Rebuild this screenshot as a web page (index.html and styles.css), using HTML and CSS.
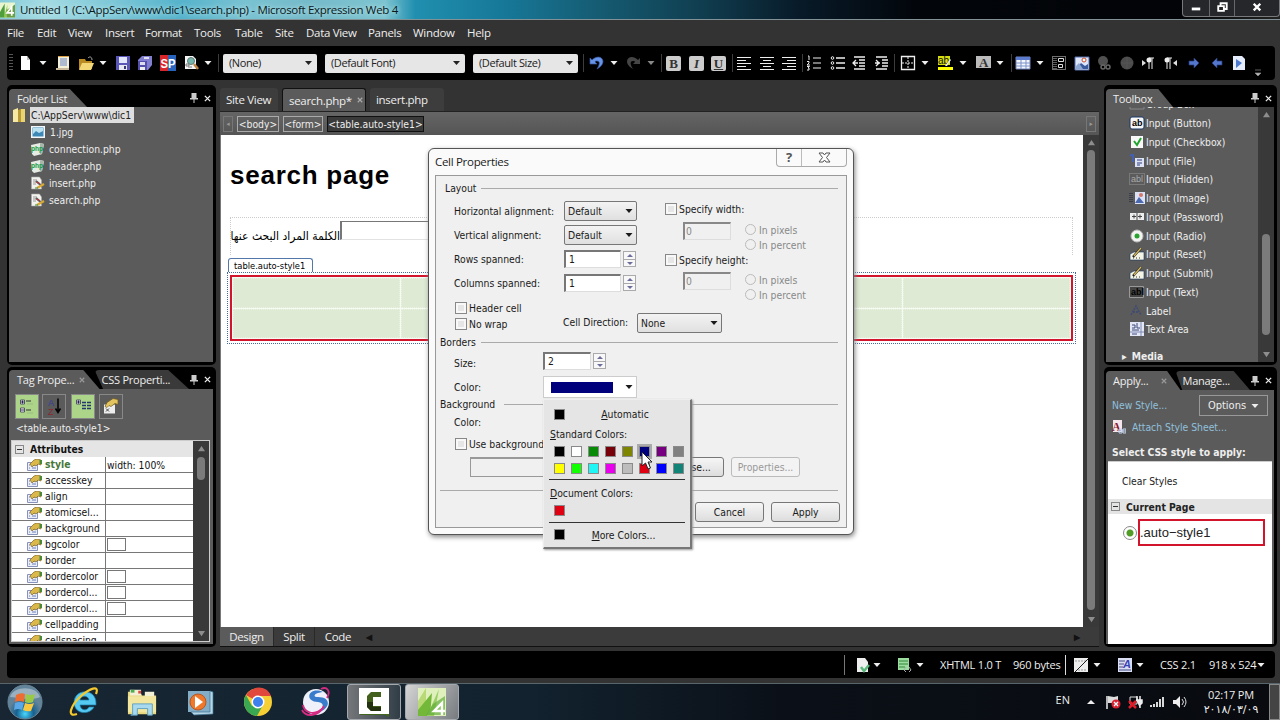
FILE: index.html
```html
<!DOCTYPE html>
<html lang="en">
<head>
    <meta charset="UTF-8">
    <meta name="viewport" content="width=device-width, initial-scale=1.0">
    <title>Untitled 1 - Microsoft Expression Web 4</title>
    <link rel="stylesheet" href="styles.css">
</head>
<body>
    <!-- shared icons -->
    <svg class="sprite" width="0" height="0">
        <symbol id="arrow" viewBox="0 0 8 16"><path d="M.5 6h7L4 10z" fill="currentColor"/></symbol>
        <symbol id="pin" viewBox="0 0 10 10"><path d="M2.500 0h5v5H9v1.500H1V5h1.500zM4.500 6.500h1V10h-1z" fill="#ccc"/></symbol>
        <symbol id="close" viewBox="0 0 8 8"><path d="M1 1l6 6M7 1L1 7" stroke="currentColor" stroke-width="1.500"/></symbol>
        <symbol id="up" viewBox="0 0 8 8"><path d="M4 1l4 6H0z" fill="#8d8d8d"/></symbol>
        <symbol id="down" viewBox="0 0 8 8"><path d="M4 7L0 1h8z" fill="#8d8d8d"/></symbol>
        <symbol id="prop" viewBox="0 0 15 12"><path d="M.5 3.500h10v8H.5z" fill="#e8edf8" stroke="#8893bd"/><path d="M2 6h1m1 0h5M2 9h1m2 0h4" stroke="#6e7fb8"/><path d="M3 5l4-4 3-1 4 1v5l-3-1-2 2-2-1-2 2z" fill="#dcb84a" stroke="#80651c" stroke-width=".7"/><path d="M12.500 1H15v4h-2.500z" fill="#478a3b"/></symbol>
        <symbol id="php" viewBox="0 0 14 14"><path d="M0 3l9-2 4 1-2 10-8 2-2-2z" fill="#e6ebe4"/><path d="M9 1l4 1-2 10-2 1z" fill="#a9b7ab"/><text x="0" y="8.500" font-size="8" textLength="12" lengthAdjust="spacingAndGlyphs" font-weight="bold" font-family="Liberation Sans" fill="#0d9c40">php</text></symbol>
        <symbol id="edit" viewBox="0 0 14 14"><path d="M.5 1h8l2 3v9H.500z" fill="#f2f2ee" stroke="#aaa" stroke-width=".6"/><path d="M2 4h4M2 6h5M2 8h3" stroke="#999"/><path d="M5 5l8 7" stroke="#5a5f68" stroke-width="2"/><path d="M6 12l7-4" stroke="#d9ab35" stroke-width="2.200"/><path d="M6 6l2 1.500" stroke="#c33" stroke-width="1.500"/><path d="M4 12h3" stroke="#3a8a3a"/></symbol>
        <symbol id="pen" viewBox="0 0 16 14"><path d="M1 7l4-2h10v8H1z" fill="#f3f4e5" stroke="#17385e" stroke-width=".6"/><path d="M4 10l8-9" stroke="#222" stroke-width="2.400"/><path d="M5 9l7-8" stroke="#d7bb5e" stroke-width="1.300"/><path d="M4 11h1m2 0h1m2 0h1" stroke="#333"/></symbol>
        <symbol id="pic" viewBox="0 0 16 16"><path d="M1 2h14v13H1z" fill="#dce5fa" stroke="#536dab"/><path d="M2 14l5-6 4 3 3-2v5z" fill="#385a9b"/><path d="M2 11l3-3 4 6H2z" fill="#8ca6d2"/><circle cx="10" cy="5" r="2" fill="#fff" stroke="#cc4b27"/></symbol>
        <symbol id="grid" viewBox="0 0 16 16"><path d="M1 2h14v12H1z" fill="#f4f7ff" stroke="#7183bb"/><path d="M1 2h14v3H1z" fill="#5c7bcc"/><path d="M1 8h14M1 11h14M6 5v9M11 5v9" stroke="#7d91c8"/></symbol>
    </svg>

    <header class="titlebar">
        <svg class="app-icon" viewBox="0 0 16 16"><path d="M0 0h16v16H0z" fill="#e9f5cf"/><path d="M0 10L5 1v15H0z" fill="#4e9e3e"/><path d="M4 16L8 2l-1 14z" fill="#8fc84b"/><path d="M7 16V8l9-6v14z" fill="#6c9f43"/><path d="M12.500 14V4.500L7.500 11H15" fill="none" stroke="#fff" stroke-width="1.800"/></svg>
        <span class="title">Untitled 1 (C:\AppServ\www\dic1\search.php) - Microsoft Expression Web 4</span>
        <div class="window-buttons">
            <svg viewBox="0 0 27 17"><path d="M9 8h9v3H9z" fill="#fff"/></svg>
            <svg viewBox="0 0 25 17"><path d="M8.500 6.500h6v5h-6zM11 6V3.500h6.500v6H15" fill="none" stroke="#fff" stroke-width="2"/></svg>
            <svg viewBox="0 0 43 17"><path d="M18 4l7 7m0-7l-7 7" stroke="#fff" stroke-width="2.500"/></svg>
        </div>
    </header>

    <nav class="menubar">
        <span>File</span><span>Edit</span><span>View</span><span>Insert</span><span>Format</span><span>Tools</span><span>Table</span><span>Site</span><span>Data View</span><span>Panels</span><span>Window</span><span>Help</span>
    </nav>

    <div class="toolbar">
        <i class="grip"></i>
        <svg class="ic" viewBox="0 0 16 16"><path d="M4 1h6l3 4v10H4z" fill="#fff"/><path d="M10 1v4h3" fill="#bbb"/></svg>
        <svg class="ar"><use href="#arrow"/></svg>
        <svg class="ic" viewBox="0 0 16 16"><path d="M3 1h11v12H3z" fill="#f3efd9"/><path d="M5 4h7M5 6h7M5 8h7M5 10h7" stroke="#6684c7"/><path d="M1 13h13v2H1z" fill="#c9b79a"/><path d="M3 1h11v1H3z" fill="#dca24a"/></svg>
        <svg class="ic" viewBox="0 0 16 16"><path d="M1 4h6l1 2h6v8H1z" fill="#b98b22"/><path d="M4 8h12l-3 7H1z" fill="#f3d776"/><path d="M10 3c2-2 4-1 4 2" fill="none" stroke="#aaa"/></svg>
        <svg class="ar"><use href="#arrow"/></svg>
        <svg class="ic" viewBox="0 0 16 16"><path d="M1 1h14v14H1z" fill="#5956b8"/><path d="M4 2h8v6H4z" fill="#e1e6fa"/><path d="M4 10h8v5H4z" fill="#e6e6f1"/><path d="M9 11h2v3H9z" fill="#333773"/></svg>
        <svg class="ic" viewBox="0 0 16 16"><path d="M5 1h10v9l-4 5H1V5z" fill="#827fd0"/><path d="M1 6h9v9H1z" fill="#534fab"/><path d="M3 7h5v3H3zM7 2h5v2H7z" fill="#dde"/><path d="M3 12h5v3H3z" fill="#eee"/></svg>
        <svg class="ic" viewBox="0 0 16 16"><path d="M0 0h8v16H0z" fill="#d8262b"/><path d="M8 0h8v16H8z" fill="#2763bb"/><text x="0.500" y="13" font-size="13" textLength="15" lengthAdjust="spacingAndGlyphs" font-family="Liberation Sans" font-weight="bold" fill="#fff">SP</text></svg>
        <svg class="ic" viewBox="0 0 16 16"><path d="M2 1h8l3 3v10H2z" fill="#f5f5f5"/><circle cx="8" cy="6" r="3.500" fill="#76b7ac" stroke="#627a77"/><path d="M11 9l4 5" stroke="#c18744" stroke-width="2.500"/><path d="M3 9h3v2H3zM5 12h4" stroke="#777" fill="none"/></svg>
        <svg class="ar"><use href="#arrow"/></svg>
        <i class="sep"></i>
        <div class="combo none"><span>(None)</span><svg><use href="#arrow"/></svg></div>
        <div class="combo font"><span>(Default Font)</span><svg><use href="#arrow"/></svg></div>
        <div class="combo size"><span>(Default Size)</span><svg><use href="#arrow"/></svg></div>
        <i class="sep"></i>
        <svg class="ic" viewBox="0 0 16 16"><path d="M1 3l2 2c4-4 10-4 11 1 0 4-3 6-6 8 2-3 4-8 0-8-1 0-2 0-2 1l2 2H1z" fill="#6794e6" stroke="#3757a8" stroke-width=".7"/></svg>
        <svg class="ar"><use href="#arrow"/></svg>
        <svg class="ic" viewBox="0 0 16 16"><path d="M15 3l-2 2c-4-4-10-4-11 1 0 4 3 6 6 8-2-3-4-8 0-8 1 0 2 0 2 1L8 9h7z" fill="#454545"/></svg>
        <svg class="ar dim"><use href="#arrow"/></svg>
        <i class="sep"></i>
        <b class="fmt">B</b>
        <i class="fmt">I</i>
        <u class="fmt">U</u>
        <i class="sep"></i>
        <svg class="ic" viewBox="0 0 16 16"><path d="M1 2.500h14M1 5.500h9M1 8.500h14M1 11.500h9M1 14.500h14" stroke="#eee"/></svg>
        <svg class="ic" viewBox="0 0 16 16"><path d="M1 2.500h14M4 5.500h8M1 8.500h14M4 11.500h8M1 14.500h14" stroke="#eee"/></svg>
        <svg class="ic" viewBox="0 0 16 16"><path d="M1 2.500h14M6 5.500h9M1 8.500h14M6 11.500h9M1 14.500h14" stroke="#eee"/></svg>
        <i class="sep"></i>
        <svg class="ic" viewBox="0 0 16 16"><path d="M7 3h8M7 8h8M7 13h8M2 1h1v4M1 6.500h2v1.500l-2 2h3M1 11.500h2.500L2 13h1v2H1" stroke="#eee" fill="none"/></svg>
        <svg class="ic" viewBox="0 0 16 16"><path d="M6 3h9M6 8h9M6 13h9" stroke="#eee" stroke-width="1.300"/><g fill="none" stroke="#eee"><circle cx="2.500" cy="3" r="1.300"/><circle cx="2.500" cy="8" r="1.300"/><circle cx="2.500" cy="13" r="1.300"/></g></svg>
        <svg class="ic" viewBox="0 0 16 16"><path d="M3 2h11M8 5h6M8 8h6M8 11h6M3 14h11M5 5L2 8l3 3M2 8h5" stroke="#eee" stroke-width="1.300" fill="none"/></svg>
        <svg class="ic" viewBox="0 0 16 16"><path d="M2 2h11M8 5h6M8 8h6M8 11h6M2 14h11M2 5l3 3-3 3M1 8h5" stroke="#eee" stroke-width="1.300" fill="none"/></svg>
        <i class="sep"></i>
        <svg class="ic" viewBox="0 0 16 16"><path d="M1.500 1.500h13v13h-13z" fill="none" stroke="#eee" stroke-width="1.300"/><path d="M8 2v12M2 8h12" stroke="#eee" stroke-dasharray="2 1"/></svg>
        <svg class="ar"><use href="#arrow"/></svg>
        <svg class="ic" viewBox="0 0 16 16"><path d="M1 1h12v9H1z" fill="#d5df10"/><text x="1" y="9" font-size="10" font-family="Liberation Sans" fill="#111">ab</text><path d="M14 5l-4 6H8l5-7z" fill="#e4e8ee"/><path d="M1 12h15v3H1z" fill="#ff0"/></svg>
        <svg class="ar"><use href="#arrow"/></svg>
        <svg class="ic" viewBox="0 0 16 16"><path d="M1 1h15v12H1z" fill="#bbb"/><text x="4" y="11.500" font-size="13" font-family="Liberation Serif" font-weight="bold" fill="#333">A</text></svg>
        <svg class="ar"><use href="#arrow"/></svg>
        <i class="sep"></i>
        <svg class="ic"><use href="#grid"/></svg>
        <svg class="ar"><use href="#arrow"/></svg>
        <svg class="ic" viewBox="0 0 16 16"><path d="M1.500 1.500h13v13h-13z" fill="none" stroke="#ddd" stroke-dasharray="1 1"/><path d="M3 3v11M5 3v11" stroke="#bbb" stroke-dasharray="1 1"/><path d="M7.500 3.500h5v3h-5zM7.500 9.500h4v3h-4z" fill="none" stroke="#ddd"/></svg>
        <svg class="ic"><use href="#pic"/></svg>
        <svg class="ic" viewBox="0 0 16 16"><circle cx="7" cy="6" r="5" fill="#505050"/><g fill="none" stroke="#666" stroke-width="1.500"><circle cx="7" cy="12" r="2"/><circle cx="12" cy="12" r="2"/></g></svg>
        <svg class="ic" viewBox="0 0 16 16"><circle cx="8" cy="8" r="6.500" fill="#4c4c4c"/><path d="M2 8h12M8 2v12" stroke="#555"/></svg>
        <svg class="ic" viewBox="0 0 16 16"><path d="M2 5l4 3-4 3z" fill="#ddd"/><path d="M9 14V3h5M12 3v11" stroke="#eee" fill="none"/><circle cx="9" cy="5" r="2.500" fill="#eee"/></svg>
        <svg class="ic" viewBox="0 0 16 16"><path d="M14 5l-4 3 4 3z" fill="#ddd"/><path d="M4 14V3h5M7 3v11" stroke="#eee" fill="none"/><circle cx="4" cy="5" r="2.500" fill="#eee"/></svg>
        <svg class="ic" viewBox="0 0 16 16"><path d="M3 6h5V3l5 5-5 5v-3H3z" fill="#5477cd" stroke="#263b79" stroke-width=".7"/></svg>
        <svg class="ic" viewBox="0 0 16 16"><path d="M13 6H8V3L3 8l5 5v-3h5z" fill="#5477cd" stroke="#263b79" stroke-width=".7"/></svg>
        <svg class="ic" viewBox="0 0 16 16"><path d="M2 1h9l3 3v11H2z" fill="#e5edfc"/><path d="M5 4l6 4-6 5z" fill="#4c78ce"/></svg>
        <svg class="overflow" viewBox="0 0 8 8"><path d="M1 1h6M1 4h6L4 7z" stroke="#888" fill="#bbb" stroke-width=".7"/></svg>
    </div>

    <main class="workspace">
        <aside class="side left">
            <section class="panel folder-panel">
                <div class="panel-head">
                    <span class="tab">Folder List</span>
                    <span class="head-tools"><svg><use href="#pin"/></svg><svg class="x"><use href="#close"/></svg></span>
                </div>
                <div class="panel-body folder-list">
                    <div class="root"><svg viewBox="0 0 12 14"><path d="M0 2l5-2v14H0z" fill="#f7e9a1"/><path d="M5 2l3-1v13H5z" fill="#b89b38"/><path d="M8 1h4v13H8z" fill="#e8d471"/></svg><span>C:\AppServ\www\dic1</span></div>
                    <div class="file jpg"><svg viewBox="0 0 14 14"><path d="M0 1h14v12H0z" fill="#f3f7fa"/><path d="M1.500 2.500h11v9h-11z" fill="#3d88b7"/><path d="M2 3h10v3L8 8 5 6 2 9z" fill="#bce2f2"/></svg><span>1.jpg</span></div>
                    <div class="file"><svg><use href="#php"/></svg><span>connection.php</span></div>
                    <div class="file"><svg><use href="#php"/></svg><span>header.php</span></div>
                    <div class="file"><svg><use href="#edit"/></svg><span>insert.php</span></div>
                    <div class="file"><svg><use href="#edit"/></svg><span>search.php</span></div>
                </div>
            </section>

            <section class="panel tag-panel">
                <div class="panel-head">
                    <span class="tab two">Tag Prope...<svg class="tx"><use href="#close"/></svg></span>
                    <span class="tab back">CSS Properti...</span>
                    <span class="head-tools"><svg><use href="#pin"/></svg><svg class="x"><use href="#close"/></svg></span>
                </div>
                <div class="panel-body tag-body">
                    <div class="tag-tools">
                        <svg class="on" viewBox="0 0 22 22"><path d="M4.500 4.500h4v4h-4zM4.500 12.500h4v4h-4z" fill="#fff" stroke="#556"/><path d="M6.500 5v3M5 6.500h3M5 14.500h3" stroke="#225"/><path d="M10 5.500h5M10 14.500h5" stroke="#333"/><path d="M11 8.500h6M11 17.500h6" stroke="#9aba80"/></svg>
                        <svg viewBox="0 0 22 22"><text x="5" y="10" font-size="9" font-family="Liberation Sans" fill="#343b9e">A</text><text x="5" y="19" font-size="9" font-family="Liberation Sans" fill="#8d2630">Z</text><path d="M15 3v13M12.500 13l2.500 4 2.500-4" stroke="#000" fill="none" stroke-width="1.500"/></svg>
                        <svg class="on second" viewBox="0 0 22 22"><path d="M4.500 4.500h4v4h-4z" fill="#fff" stroke="#556"/><path d="M6.500 5v3M5 6.500h3" stroke="#225"/><path d="M10 7h4M15 7h4M10 10h4M15 10h4M10 13h4M15 13h4" stroke="#26376b" stroke-width="1.400"/></svg>
                        <svg class="last" viewBox="0 0 22 22"><path d="M4 9h11v9H4z" fill="#eee"/><path d="M5 11l2-4 6-4 5 1v5l-3-1-4 3-2-1-2 2z" fill="#e3c45f" stroke="#6b571e" stroke-width=".7"/><path d="M6 13l3 3m-3 0l3-3" stroke="#444"/></svg>
                    </div>
                    <div class="tag-name">&lt;table.auto-style1&gt;</div>
                    <div class="prop-box">
                        <div class="prop-list">
                            <div class="group"><i class="minus"></i>Attributes</div>
                            <div class="prop set"><svg><use href="#prop"/></svg><span>style</span><em>width: 100%</em></div>
                            <div class="prop"><svg><use href="#prop"/></svg><span>accesskey</span><em></em></div>
                            <div class="prop"><svg><use href="#prop"/></svg><span>align</span><em></em></div>
                            <div class="prop"><svg><use href="#prop"/></svg><span>atomicsel...</span><em></em></div>
                            <div class="prop"><svg><use href="#prop"/></svg><span>background</span><em></em></div>
                            <div class="prop"><svg><use href="#prop"/></svg><span>bgcolor</span><em><i></i></em></div>
                            <div class="prop"><svg><use href="#prop"/></svg><span>border</span><em></em></div>
                            <div class="prop"><svg><use href="#prop"/></svg><span>bordercolor</span><em><i></i></em></div>
                            <div class="prop"><svg><use href="#prop"/></svg><span>bordercol...</span><em><i></i></em></div>
                            <div class="prop"><svg><use href="#prop"/></svg><span>bordercol...</span><em><i></i></em></div>
                            <div class="prop"><svg><use href="#prop"/></svg><span>cellpadding</span><em></em></div>
                            <div class="prop"><svg><use href="#prop"/></svg><span>cellspacing</span><em></em></div>
                        </div>
                        <div class="scroll prop-scroll"><svg><use href="#up"/></svg><i></i><svg class="end"><use href="#down"/></svg></div>
                    </div>
                </div>
            </section>
        </aside>

        <section class="editor">
            <div class="doc-tabs">
                <span class="doc-tab site">Site View</span>
                <span class="doc-tab active">search.php*<svg><use href="#close"/></svg></span>
                <span class="doc-tab insert">insert.php</span>
            </div>
            <div class="crumbs">
                <i class="nav">◂</i><span class="body">&lt;body&gt;</span><span class="form">&lt;form&gt;</span><span class="current">&lt;table.auto-style1&gt;</span><i class="nav next">▸</i>
            </div>
            <div class="design">
                <div class="canvas">
                    <h1>search page</h1>
                    <div class="form-box"><span dir="rtl" lang="ar">الكلمة المراد البحث عنها</span><i></i></div>
                    <div class="tag-label">table.auto-style1</div>
                    <div class="table-outline">
                        <div class="table">
                            <i></i><i></i><i></i><i></i><i></i>
                            <i></i><i></i><i></i><i></i><i></i>
                        </div>
                    </div>
                </div>
                <div class="scroll design-scroll"><svg><use href="#up"/></svg><i></i><svg class="end"><use href="#down"/></svg></div>
            </div>
            <div class="view-tabs"><span class="active">Design</span><span>Split</span><span>Code</span><b>◀</b><b class="tail">▶</b></div>
        </section>

        <aside class="side right">
            <section class="panel toolbox-panel">
                <div class="panel-head">
                    <span class="tab">Toolbox</span>
                    <span class="head-tools"><svg><use href="#pin"/></svg><svg class="x"><use href="#close"/></svg></span>
                </div>
                <div class="panel-body toolbox">
                    <div class="tool-list">
                        <div><svg viewBox="0 0 16 14"><path d="M1 2h14v10H1z" fill="none" stroke="#888"/></svg>Group Box</div>
                        <div><svg viewBox="0 0 16 14"><rect x="1" y="1" width="14" height="12" rx="2" fill="#f7f7f7" stroke="#1b3866"/><text x="3" y="10" font-size="9" font-weight="bold" font-family="Liberation Sans">ab</text></svg>Input (Button)</div>
                        <div><svg viewBox="0 0 16 14"><path d="M2 1h12v12H2z" fill="#f8f8f8"/><path d="M5 6l3 4 4-7" stroke="#22a52e" stroke-width="2" fill="none"/></svg>Input (Checkbox)</div>
                        <div><svg viewBox="0 0 16 14"><path d="M1 2l3-2v8" stroke="#4560b0" stroke-width="2" fill="none"/><path d="M6 4h9v9H6z" fill="#dde3f5"/><path d="M8 6h5M8 9h5M8 11h3" stroke="#2d3e7d"/></svg>Input (File)</div>
                        <div><svg viewBox="0 0 16 14"><path d="M.5 1.500h15v11H.5z" fill="none" stroke="#999" stroke-dasharray="1 1"/><text x="2" y="10" font-size="9" font-family="Liberation Sans" fill="#aaa">abl</text></svg>Input (Hidden)</div>
                        <div><svg viewBox="0 0 16 14"><path d="M1 2v10M3 2v10" stroke="#17203c" stroke-dasharray="1 1"/><path d="M6 1h10v12H6z" fill="#dbe2f7"/><path d="M6 12l4-6 5 6z" fill="#4b69ae"/><circle cx="12" cy="4" r="2" fill="#d47869"/></svg>Input (Image)</div>
                        <div><svg viewBox="0 0 16 14"><path d="M1 3h14v7H1z" fill="#eee"/><path d="M5 4.500v4M3 6.500h4M11 4.500v4M9 6.500h4M8 3v7" stroke="#444"/></svg>Input (Password)</div>
                        <div><svg viewBox="0 0 16 14"><circle cx="8" cy="7" r="6" fill="#f3f3f3" stroke="#bbb"/><circle cx="8" cy="7" r="2.500" fill="#29a32f"/></svg>Input (Radio)</div>
                        <div><svg><use href="#pen"/></svg>Input (Reset)</div>
                        <div><svg><use href="#pen"/></svg>Input (Submit)</div>
                        <div><svg viewBox="0 0 16 14"><path d="M.5 1.500h14v11H.5z" fill="#444" stroke="#999"/><text x="2" y="10" font-size="9" font-weight="bold" font-family="Liberation Sans">abl</text></svg>Input (Text)</div>
                        <div><svg viewBox="0 0 16 14"><path d="M2 11l5-9 5 9M4 8h6" fill="none" stroke="#3d4a76" stroke-width="1.500" stroke-dasharray="2 1"/></svg>Label</div>
                        <div><svg viewBox="0 0 16 14"><path d="M1 0h14v14H1z" fill="#e3e7f5"/><path d="M12 0v14M1 10h14" stroke="#7d88b3"/><path d="M3 3h3v3H3M8 1v5h3M3 8h7M3 12h5" stroke="#3d4879" fill="none"/></svg>Text Area</div>
                        <div class="media"><span>▸</span>Media</div>
                    </div>
                    <div class="scroll tool-scroll"><svg><use href="#up"/></svg><i></i><svg class="end"><use href="#down"/></svg></div>
                </div>
            </section>
            <section class="panel style-panel">
                <div class="panel-head">
                    <span class="tab two">Apply...<svg class="tx"><use href="#close"/></svg></span>
                    <span class="tab back">Manage...</span>
                    <span class="head-tools"><svg><use href="#pin"/></svg><svg class="x"><use href="#close"/></svg></span>
                </div>
                <div class="panel-body style-body">
                    <div class="style-top"><span class="link">New Style...</span><span class="options">Options<svg><use href="#arrow"/></svg></span></div>
                    <div class="attach"><svg viewBox="0 0 14 14"><path d="M1 0h9v12H1z" fill="#f5e7eb"/><text x="0" y="11" font-size="12" font-family="Liberation Serif" font-weight="bold" fill="#831b32">A</text><path d="M6 11h8M7 9h3v4H7zM11 9h3v4h-3z" fill="none" stroke="#c6d5ee"/></svg><span class="link">Attach Style Sheet...</span></div>
                    <div class="select-title">Select CSS style to apply:</div>
                    <div class="style-list">
                        <div class="clear">Clear Styles</div>
                        <div class="current-page"><i class="minus"></i>Current Page</div>
                        <div class="style-item"><i></i><span>.auto−style1</span></div>
                    </div>
                </div>
            </section>
        </aside>
    </main>

    <footer class="statusbar">
        <i class="sep"></i>
        <svg class="ic" viewBox="0 0 16 16"><path d="M2 1h8l3 4v10H2z" fill="#eee"/><path d="M6 10l3 4 5-6" fill="none" stroke="#58b87b" stroke-width="2.500"/></svg><svg class="ar"><use href="#arrow"/></svg>
        <svg class="ic" viewBox="0 0 16 16"><path d="M2 1h11v12H2z" fill="#9add9e"/><path d="M3 4h9M3 7h9M3 10h6" stroke="#37853c"/><path d="M10 10l-2 3 2 2m3-5l2 3-2 2" fill="none" stroke="#aaa"/></svg><svg class="ar"><use href="#arrow"/></svg>
        <span>XHTML 1.0 T</span><span>960 bytes</span>
        <i class="sep light"></i>
        <svg class="ic" viewBox="0 0 16 16"><path d="M1 1h14v14H1z" fill="#eee"/><path d="M2 4h12M5 13h9" stroke="#999" stroke-dasharray="2 1"/><path d="M2 15L15 2" stroke="#222"/></svg><svg class="ar"><use href="#arrow"/></svg>
        <svg class="ic" viewBox="0 0 16 16"><path d="M1 1h14v14H1z" fill="#d9def3"/><path d="M2 4h6M2 7h5M2 10h4M2 13h12" stroke="#444b82"/><text x="6" y="11" font-size="11" font-style="italic" font-weight="bold" font-family="Liberation Sans" fill="#3942b5">A</text></svg><svg class="ar"><use href="#arrow"/></svg>
        <span>CSS 2.1</span><span>918 x 524</span><svg class="ar"><use href="#arrow"/></svg>
    </footer>

    <div class="taskbar">
        <svg class="start" viewBox="0 0 36 36"><defs><radialGradient id="orb" cx=".5" cy=".85"><stop offset="0" stop-color="#48d7ff"/><stop offset=".5" stop-color="#17618f"/><stop offset="1" stop-color="#62849b"/></radialGradient></defs><circle cx="18" cy="18" r="17" fill="url(#orb)" stroke="#6b8798"/><path d="M3 13C6 2 29 1 33 13c-8 4-20 1-30 0" fill="#b5c7d2" opacity=".65"/><path d="M9 11q5-3 9-1l-1 8q-5-2-9 0z" fill="#ed6c32"/><path d="M19 10q4 2 9 0l-2 8q-4 2-8 0z" fill="#98ca47"/><path d="M8 19q5-2 9 0l-2 7q-4-2-8 0z" fill="#5ba8e9"/><path d="M18 19q5 2 9 0l-3 8q-4 1-8-1z" fill="#fac83e"/></svg>
        <svg viewBox="0 0 30 30"><path d="M25 20c-4 8-19 8-20-4C5 1 27 1 27 16v2H11c1 6 7 6 9 2zM11 13h9c-1-5-8-5-9 0z" fill="#55c9f2" stroke="#187eaf" stroke-width=".7"/><path d="M8 27C-3 31 2 18 12 9 20 2 31-3 27 7" fill="none" stroke="#f5c92e" stroke-width="2.200"/></svg>
        <svg viewBox="0 0 32 30"><path d="M1 4h13l2 4h15v20H1z" fill="#e9d77d"/><path d="M3 2h12v6H3zM19 4h10v5H19z" fill="#f4f0d6"/><path d="M4 2h4v3H4z" fill="#4caf50"/><path d="M12 3h3v3h-3z" fill="#d84b3e"/><path d="M1 9h30v17H1z" fill="#f3e7a0"/><path d="M6 28V17h21v12h-5v-7H11v7H4z" fill="#a9d9ee" stroke="#5c9fc2"/></svg>
        <svg viewBox="0 0 30 30"><path d="M3 4h22v21H3z" fill="#83adc6"/><path d="M25 4l3 1v22L9 28l-3-3h19z" fill="#b6d5e5" stroke="#3b7396" stroke-width=".7"/><circle cx="13" cy="15" r="8" fill="#ef782b" stroke="#b45827"/><path d="M10 9l8 6-8 6z" fill="#fff"/></svg>
        <svg viewBox="0 0 30 30"><circle cx="15" cy="15" r="14" fill="#f6cf35"/><path d="M15 15L3 8C9-2 24-2 28 9H16z" fill="#e0483e"/><path d="M3 8C-2 16 3 28 14 29l6-11-11 1z" fill="#39a852"/><circle cx="15" cy="15" r="6.500" fill="#fff"/><circle cx="15" cy="15" r="5" fill="#3e80ec"/></svg>
        <svg viewBox="0 0 30 30"><circle cx="15" cy="15" r="13" fill="#eef1fa"/><path d="M22 5C8-1 2 14 17 15c8 1 5 8-3 11 15-2 18-16 3-16-6 0-4-4 5-5" fill="#3a7ccc"/><path d="M20 2c6-3 10 2 6 9M1 23c4 8 17 6 22-4M2 18c1 7 11 12 20 3" fill="none" stroke="#d42b83" stroke-width="1.800"/></svg>
        <div class="task"><svg viewBox="0 0 30 30"><path d="M0 1h30v26H0z" fill="#fff"/><path d="M1 27h29v3l-4-2H1z" fill="#42661c"/><path d="M22 5H12L8 9v11l4 4h10v-5h-8v-9h8z" fill="#42601c"/><path d="M8 15h6v5h8v4H12l-4-4z" fill="#24310e"/></svg></div>
        <div class="task active"><svg viewBox="0 0 30 30"><path d="M1 1h28v28H1z" fill="#dff0bd"/><path d="M1 14L9 1v28H1z" fill="#b8d975"/><path d="M1 23L15 6l-2 23H1z" fill="#73b839"/><path d="M10 29L22 2l-5 27z" fill="#9bcf65"/><path d="M16 17l12-8v19H9z" fill="#5caa35" opacity=".65"/><path d="M25 28V16l-8 8h11" fill="none" stroke="#fff" stroke-width="2.400"/></svg></div>
        <div class="tray">
            <span class="lang">EN</span>
            <svg viewBox="0 0 16 16"><path d="M8 6l4 4H4z" fill="#eee"/></svg>
            <svg viewBox="0 0 16 16"><path d="M2 2v13" stroke="#eee" stroke-width="1.500"/><path d="M3 2l6 1 4-1v7H3z" fill="#ddd"/><circle cx="11" cy="10" r="4.500" fill="#d82131"/><path d="M9 8l4 4m0-4l-4 4" stroke="#fff" stroke-width="1.300"/></svg>
            <svg viewBox="0 0 16 16"><path d="M3 3h7v7H3z" fill="none" stroke="#ddd"/><path d="M10 2v4m3-4v4M9 6h6v3l-2 2v3" fill="#eee" stroke="#eee" stroke-width="1.500"/><path d="M2 7l7 7m0-7l-7 7" stroke="#dd1e29" stroke-width="2.500"/></svg>
            <svg viewBox="0 0 16 16"><path d="M2 13v-2M5 13v-3M8 13V8M11 13V5M14 13V3" stroke="#eee" stroke-width="1.800"/></svg>
            <svg viewBox="0 0 16 16"><path d="M2 6h3l4-4v12l-4-4H2z" fill="#eee"/><path d="M11 5q3 3 0 6M13 3q4 5 0 10" fill="none" stroke="#ddd"/></svg>
            <div class="clock"><span>02:17 PM</span><span lang="ar">٢٠١٨/٠٣/٠٩</span></div>
            <i class="show-desktop"></i>
        </div>
    </div>

    <div class="dialog">
        <div class="dialog-head"><span>Cell Properties</span><div class="dialog-buttons"><b>?</b><svg viewBox="0 0 44 17"><path d="M17 4h4l1.500 2L24 4h4l-3.500 4.500L28 13h-4l-1.500-2-1.500 2h-4l3.500-4.500z" fill="#fff" stroke="#555"/></svg></div></div>
        <div class="dialog-body">
            <div class="legend inset"><span>Layout</span></div>
            <div class="layout-area">
                <div class="fields">
                    <label>Horizontal alignment:</label><div class="select">Default<svg><use href="#arrow"/></svg></div>
                    <label>Vertical alignment:</label><div class="select">Default<svg><use href="#arrow"/></svg></div>
                    <label>Rows spanned:</label><div class="spin"><span>1</span><i class="steps"></i></div>
                    <label>Columns spanned:</label><div class="spin"><span>1</span><i class="steps"></i></div>
                </div>
                <div class="sizes">
                    <label class="check"><i></i>Specify width:</label>
                    <div class="measure"><span>0</span><div><label><i></i>In pixels</label><label><i></i>In percent</label></div></div>
                    <label class="check"><i></i>Specify height:</label>
                    <div class="measure last"><span>0</span><div><label><i></i>In pixels</label><label><i></i>In percent</label></div></div>
                </div>
            </div>
            <div class="cell-row">
                <div class="cell-checks"><label class="check"><i></i>Header cell</label><label class="check"><i></i>No wrap</label></div>
                <label class="direction">Cell Direction:</label>
                <div class="select wide">None<svg><use href="#arrow"/></svg></div>
            </div>
            <div class="legend"><span>Borders</span></div>
            <div class="border-row size-row"><label>Size:</label><div class="spin small"><span>2</span><i class="steps"></i></div></div>
            <div class="border-row color-row"><label>Color:</label><div class="color-field"><i></i><svg><use href="#arrow"/></svg></div></div>
            <div class="legend bg-legend"><span>Background</span></div>
            <div class="bg-color">Color:</div>
            <label class="check use-bg"><i></i>Use background picture</label>
            <div class="path-row"><i></i><span class="button browse">Browse...</span><span class="button disabled">Properties...</span></div>
            <div class="actions"><span class="button">Cancel</span><span class="button">Apply</span></div>
        </div>

        <div class="color-menu">
            <div class="menu-row auto"><i></i><span><u>A</u>utomatic</span></div>
            <div class="menu-title"><u>S</u>tandard Colors:</div>
            <div class="swatches">
                <i class="black"></i><i class="white"></i><i class="green"></i><i class="maroon"></i><i class="olive"></i><i class="navy"></i><i class="purple"></i><i class="gray"></i>
                <i class="yellow"></i><i class="lime"></i><i class="aqua"></i><i class="magenta"></i><i class="silver"></i><i class="red"></i><i class="blue"></i><i class="teal"></i>
            </div>
            <div class="menu-title doc"><u>D</u>ocument Colors:</div>
            <i class="doc-color red"></i>
            <div class="menu-row more"><i></i><span><u>M</u>ore Colors...</span></div>
        </div>
        <svg class="cursor" viewBox="0 0 12 19"><path d="M1 1v14l3.500-3 2.500 6 2.500-1-2.500-6h4z" fill="#fff" stroke="#222"/></svg>
    </div>
</body>
</html>
```

FILE: styles.css
```css
* {
    box-sizing: border-box;
}

body {
    margin: 0;
    width: 1280px;
    height: 720px;
    overflow: hidden;
    display: flex;
    flex-direction: column;
    position: relative;
    background: #333;
    color: #eee;
    font-family: "DejaVu Sans Condensed", "DejaVu Sans", sans-serif;
    font-size: 10.3px;
    line-height: 16px;
    white-space: nowrap;
}

i {
    font-style: normal;
}

svg {
    display: block;
    flex: none;
}

.sprite {
    position: absolute;
}

/* title and menu */
.titlebar {
    height: 20px;
    flex: none;
    display: flex;
    align-items: center;
    background: linear-gradient(90deg, #86cbd9 0, #a4dbe3 45px, #55b3cb 180px, #79c2d2 245px, #75bac9 310px, #7dc4d0 385px, #208faf 415px, #17799a 500px, #155b72 600px, #103e50 700px, #081a28 800px, #02050a 920px, #020407 1180px, #222 1280px);
    border-bottom: 1px solid #829196;
}

.app-icon {
    width: 15px;
    height: 16px;
}

.title {
    margin-left: 5px;
    color: #0a1820;
    font-family: "Open Sans", sans-serif;
    font-size: 11.5px;
    letter-spacing: -.32px;
    text-shadow: 0 0 5px #d6f4f5;
}

.window-buttons {
    display: flex;
    margin-left: auto;
    align-self: flex-start;
    width: 98px;
    height: 17px;
    border: 1px solid #77797b;
    border-top: 0;
    border-radius: 0 0 4px 4px;
    background: #25272a;
}

.window-buttons svg {
    height: 16px;
    border-right: 1px solid #66696b;
}

.window-buttons svg:nth-child(1) { width: 27px; }
.window-buttons svg:nth-child(2) { width: 25px; }
.window-buttons svg:nth-child(3) { width: 44px; border: 0; }

.menubar {
    height: 26px;
    flex: none;
    padding-left: 7px;
    display: grid;
    grid-template-columns: 30px 31px 37px 40px 49px 41px 40px 31px 62px 45px 54px 40px;
    align-items: center;
    font-family: "Open Sans", sans-serif;
    font-size: 11.5px;
    letter-spacing: -.3px;
}

.toolbar {
    height: 34px;
    flex: none;
    margin: 0 5px 0 7px;
    padding-left: 2px;
    background: #000;
    border-radius: 4px;
    display: grid;
    align-items: center;
    grid-template-columns: 8px 22px 16px 23px 21px 16px 22px 23px 23px 21px 14px 5px 102px 148px 110px 6px 21px 15px 22px 14px 5px 23px 22px 21px 4px 23px 22px 21px 4px 24px 21px 23px 20px 6px 21px 16px 22px 16px 21px 15px 4px 21px 15px 23px 22px 23px 21px 23px 23px 23px 22px 23px 20px;
}

.ic {
    width: 16px;
    height: 16px;
}

.ar {
    width: 8px;
    height: 16px;
}

.dim {
    color: #888;
}

.grip {
    width: 4px;
    height: 18px;
    background: repeating-linear-gradient(#555 0 1px, #000 1px 3px);
}

.sep {
    width: 1px;
    height: 18px;
    background: #3c3c3c;
}

.combo {
    height: 19px;
    display: flex;
    align-items: center;
    justify-content: space-between;
    padding: 0 4px 0 6px;
    border-radius: 2px;
    background: #e6e6e6;
    color: #222;
    font-family: "Open Sans", sans-serif;
    font-size: 11px;
    letter-spacing: -.4px;
}

.combo svg {
    width: 9px;
    height: 16px;
}

.none { width: 94px; }
.font { width: 140px; }
.size { width: 105px; }

.fmt {
    width: 15px;
    height: 15px;
    border-radius: 2px;
    background: #ccc;
    color: #333;
    font: bold 13px/15px "Liberation Serif", serif;
    text-align: center;
}

i.fmt {
    font-style: italic;
}

.overflow {
    width: 8px;
    height: 8px;
    margin-top: 20px;
}

/* docked panels */
.workspace {
    height: 571px;
    flex: none;
    display: flex;
    padding: 5px 4px 4px 7px;
}

.side {
    display: flex;
    flex-direction: column;
    gap: 2px;
}

.left { width: 209px; }
.right { width: 173px; margin-left: 5px; }

.panel {
    background: #000;
    border-radius: 5px;
    padding: 4px 3px 3px 2px;
    display: flex;
    flex-direction: column;
}

.folder-panel, .toolbox-panel { height: 280px; }
.tag-panel, .style-panel { height: 280px; }

.panel-head {
    height: 18px;
    flex: none;
    display: flex;
    font-family: "Open Sans", sans-serif;
    font-size: 11px;
    letter-spacing: -.25px;
    line-height: 19px;
}

.tab {
    width: 78px;
    padding-left: 8px;
    border-radius: 4px 0 0 0;
    background: #5b5b5b;
    clip-path: polygon(0 0, 78% 0, 100% 100%, 0 100%);
}

.tab.two {
    width: 93px;
    display: flex;
    align-items: center;
    clip-path: polygon(0 0, 82% 0, 100% 100%, 0 100%);
}

.tab .tx {
    width: 6px;
    height: 6px;
    margin-left: auto;
    margin-right: 15px;
    color: #999;
}

.tab.back {
    width: 97px;
    margin-left: -5px;
    padding-left: 7px;
    background: #3a3a3a;
    clip-path: polygon(0 0, 78% 0, 100% 100%, 9% 100%);
}

.head-tools {
    display: flex;
    gap: 5px;
    align-items: center;
    margin-left: auto;
    padding-right: 1px;
}

.head-tools svg {
    width: 10px;
    height: 10px;
}

.head-tools .x {
    width: 7px;
    height: 7px;
    margin-right: 1px;
}

.panel-body {
    flex: 1;
    min-height: 0;
    background: #5b5b5b;
}

.root, .file {
    height: 17px;
    display: flex;
    align-items: center;
}

.root {
    height: 16.5px;
    padding-left: 4px;
    gap: 5px;
}

.root svg {
    width: 12px;
    height: 14px;
}

.root span {
    height: 16px;
    width: 104px;
    line-height: 16px;
    padding-left: 1px;
    background: #dedede;
    color: #222;
}

.file {
    padding-left: 22px;
    gap: 4px;
}

.jpg {
    gap: 5px;
}

.file svg {
    width: 14px;
    height: 14px;
}

.tag-panel {
    padding-top: 3px;
}

.tag-panel .panel-head, .style-panel .panel-head {
    height: 19px;
    line-height: 20px;
}

.tag-body {
    padding: 5px 3px 1px 2px;
}

.tag-tools {
    height: 26px;
    display: flex;
    padding-left: 4px;
    gap: 3px;
}

.tag-tools svg {
    width: 24px;
    height: 25px;
    border: 1px solid #888;
}

.tag-tools .on { background: #acd58a; }
.tag-tools .second { margin-left: 2px; }
.tag-tools .last { margin-left: 1px; }

.tag-name {
    height: 20px;
    padding-left: 5px;
    line-height: 17px;
}

.prop-box {
    height: 202px;
    display: flex;
    border: 1px solid #ccc;
    overflow: hidden;
    color: #111;
    background: #fff;
}

.prop-list {
    flex: 1;
    overflow: hidden;
}

.group {
    height: 16px;
    display: flex;
    align-items: center;
    padding-left: 3px;
    background: #e5e5e5;
    font-weight: bold;
}

.minus {
    width: 9px;
    height: 9px;
    margin-right: 6px;
    border: 1px solid #888;
    background: linear-gradient(#333, #333) center / 5px 1px no-repeat;
}

.prop {
    height: 16px;
    display: flex;
    align-items: center;
    padding-left: 15px;
    border-bottom: 1px solid #777;
}

.prop svg {
    width: 15px;
    height: 12px;
}

.prop span {
    width: 63px;
    padding-left: 3px;
    line-height: 15px;
}

.prop em {
    flex: 1;
    height: 16px;
    padding: 1px;
    border-left: 1px solid #777;
    font-style: normal;
    line-height: 14px;
}

.prop em i {
    display: block;
    width: 19px;
    height: 13px;
    border: 1px solid #777;
}

.set span {
    color: #477739;
    font-weight: bold;
}

.scroll {
    width: 16px;
    flex: none;
    display: flex;
    flex-direction: column;
    align-items: center;
    background: #393939;
    padding: 4px 0;
}

.scroll svg {
    width: 7px;
    height: 7px;
}

.scroll i {
    width: 8px;
    border-radius: 4px;
    background: #7b7b7b;
    margin-top: 5px;
}

.scroll .end { margin-top: auto; }
.prop-scroll i { height: 23px; }
.design-scroll i { height: 460px; margin-top: 4px; }
.tool-scroll i { height: 101px; margin-top: 116px; }

/* editor */
.editor {
    width: 879px;
    margin-left: 4px;
    display: flex;
    flex-direction: column;
}

.doc-tabs {
    height: 26px;
    display: flex;
    align-items: flex-end;
    gap: 4px;
    padding-top: 3px;
}

.doc-tab {
    height: 23px;
    padding-left: 6px;
    background: #3d3d3d;
    line-height: 23px;
    border-radius: 3px 3px 0 0;
    font-family: "Open Sans", sans-serif;
    font-size: 11.5px;
    letter-spacing: -.3px;
}

.site { width: 58px; }
.doc-tab.active { width: 84px; display: flex; align-items: center; background: #5b5b5b; border: 1px solid #111; border-bottom: 0; }
.doc-tab.insert { width: 74px; }

.doc-tab svg {
    width: 6px;
    height: 6px;
    margin-left: 5px;
    color: #aaa;
}

.crumbs {
    height: 24px;
    display: flex;
    align-items: center;
    gap: 4px;
    padding: 0 3px;
    background: linear-gradient(#656565, #555);
    border-top: 1px solid #222;
}

.crumbs span, .nav {
    height: 16px;
    border: 1px solid #aaa;
    line-height: 14px;
    text-align: center;
}

.crumbs .body { width: 42px; }
.crumbs .form { width: 40px; }

.crumbs .current {
    width: 97px;
    background: #3a3a3a;
    border-color: #111;
}

.crumbs .nav {
    width: 10px;
    border-color: #777;
    color: #999;
    font-size: 7px;
}

.crumbs .next {
    margin-left: auto;
}

.design {
    height: 492px;
    display: flex;
    background: #fff;
}

.canvas {
    flex: 1;
    padding: 24px 7px 0 7px;
    color: #000;
    border-left: 1px solid #777;
}

h1 {
    margin: 0 0 25px 2px;
    font: bold 26px/33px "Liberation Sans", sans-serif;
    letter-spacing: .75px;
}

.form-box {
    height: 38px;
    width: 843px;
    margin-left: 2px;
    display: flex;
    border: 1px dotted #ccc;
    border-bottom: 0;
}

.form-box span {
    width: 109px;
    font: 12px/37px "DejaVu Sans Condensed", "DejaVu Sans", sans-serif;
}

.form-box i {
    width: 160px;
    height: 19px;
    margin-top: 3px;
    border: 1px solid #e2e2e2;
    border-top: 1px solid #777;
    border-left: 2px solid #777;
}

.tag-label {
    width: 85px;
    height: 14px;
    margin-top: 3px;
    padding-left: 5px;
    border: 1px solid #5377a9;
    border-bottom: 0;
    border-radius: 3px 3px 0 0;
    line-height: 13px;
    font-size: 9.3px;
}

.table-outline {
    width: 849px;
    height: 72px;
    margin-left: -1px;
    padding: 2px;
    border: 1px dotted #4668a0;
}

.table {
    height: 66px;
    border: 2px solid #d2142d;
    display: grid;
    grid-template-columns: repeat(5, 1fr);
    gap: 1px;
    background: #f5fbf0;
    padding: 1px;
}

.table i {
    background: #deead3;
    border: 1px dotted #e9f1e2;
}

.view-tabs {
    height: 20px;
    display: flex;
    background: #3b3b3b;
    border-bottom: 1px solid #111;
    font-family: "Open Sans", sans-serif;
    font-size: 11.5px;
    letter-spacing: -.3px;
    line-height: 19px;
}

.view-tabs span {
    width: 41px;
    text-align: center;
    border-right: 1px solid #292929;
}

.view-tabs .active {
    width: 54px;
    background: #5b5b5b;
}

.view-tabs span:nth-child(3) { width: 46px; border: 0; }
.view-tabs b { color: #111; font-size: 8px; margin-left: 5px; }
.view-tabs .tail { margin-left: auto; margin-right: 19px; }

/* right panels */
.toolbox {
    display: flex;
    overflow: hidden;
}

.toolbox .tool-list {
    flex: 1;
    margin-top: -12px;
}

.tool-list div {
    height: 18.75px;
    display: flex;
    align-items: center;
    padding-left: 23px;
    gap: 1px;
}

.tool-list svg {
    width: 16px;
    height: 14px;
}

.tool-list .media {
    margin-top: 8px;
    padding-left: 16px;
    font-weight: bold;
    gap: 5px;
}

.right .tab { width: 67px; padding-left: 7px; }
.right .tab.two { width: 76px; padding-left: 7px; }
.right .tab.two .tx { margin-right: 14px; }
.right .tab.back { width: 76px; }
.right .head-tools { margin-left: auto; }

.style-body {
    padding: 5px 2px 0 2px;
    display: flex;
    flex-direction: column;
}

.link {
    color: #91c0dd;
}

.style-top {
    height: 25px;
    display: flex;
    justify-content: space-between;
    padding: 0 4px 0 4px;
    line-height: 20px;
}

.options {
    width: 69px;
    height: 21px;
    display: flex;
    align-items: center;
    justify-content: center;
    gap: 5px;
    border: 1px solid #999;
    font-size: 11px;
}

.options svg {
    width: 8px;
    height: 16px;
}

.attach {
    height: 20px;
    display: flex;
    gap: 6px;
    padding-left: 4px;
    line-height: 15px;
}

.attach svg {
    width: 14px;
    height: 14px;
}

.select-title {
    height: 21px;
    padding: 4px 0 0 4px;
    font-weight: bold;
}

.style-list {
    flex: 1;
    background: #fff;
    color: #222;
    border-top: 1px solid #ccc;
}

.clear {
    height: 37px;
    padding: 11px 0 0 14px;
}

.current-page {
    height: 15px;
    display: flex;
    align-items: center;
    padding-left: 3px;
    background: #e4e4e4;
    font-weight: bold;
}

.style-item {
    display: flex;
    align-items: center;
    padding: 5px 5px 0 15px;
}

.style-item i {
    width: 14px;
    height: 14px;
    border-radius: 7px;
    border: 1px solid #888;
    background: radial-gradient(circle, #519b27 0 3px, #fff 4px);
}

.style-item span {
    width: 127px;
    height: 27px;
    margin-left: 1px;
    border: 2px solid #d2142d;
    font: 13px/23px "Liberation Sans", sans-serif;
}

/* status bar */
.statusbar {
    height: 27px;
    flex: none;
    margin: 0 5px 0 7px;
    padding-left: 837px;
    display: grid;
    align-items: center;
    grid-template-columns: 11px 18px 23px 20px 24px 73px 52px 8px 20px 24px 19px 24px 49px 48px 8px;
    background: #000;
    border-radius: 4px;
    font-family: "Open Sans", sans-serif;
    font-size: 11px;
    letter-spacing: -.2px;
}

.statusbar .sep {
    height: 20px;
    background: #777;
}

.statusbar .light {
    background: #ddd;
}

/* taskbar */
.taskbar {
    height: 37px;
    margin-top: 5px;
    padding-left: 7px;
    display: flex;
    align-items: center;
    background: linear-gradient(90deg, #172632, #12232f 520px, #0b1018 780px, #080a0f);
    border-top: 1px solid #58656b;
}

.taskbar > svg {
    width: 30px;
    height: 30px;
    margin-right: 28px;
}

.taskbar > .start {
    width: 36px;
    height: 36px;
    margin-right: 26px;
}

.taskbar > svg:nth-child(6) {
    margin-right: 16px;
}

.task {
    width: 54px;
    height: 36px;
    display: flex;
    align-items: center;
    justify-content: center;
    border: 1px solid #a5a9ad;
    border-radius: 3px;
    background: linear-gradient(90deg, #74777a, #313d46);
}

.task svg {
    width: 30px;
    height: 30px;
}

.task.active {
    margin-left: 4px;
    background: linear-gradient(120deg, #d4d4d4, #777b7f);
}

.tray {
    margin-left: auto;
    height: 36px;
    display: flex;
    align-items: center;
    font-family: "Open Sans", sans-serif;
    font-size: 11px;
}

.lang {
    margin: 0 13px 5px 0;
}

.tray > svg {
    width: 16px;
    height: 16px;
    margin-right: 6px;
}

.clock {
    width: 76px;
    display: flex;
    flex-direction: column;
    text-align: center;
    line-height: 15px;
    letter-spacing: -.2px;
}

.clock [lang] {
    font-family: "DejaVu Sans", sans-serif;
}

.show-desktop {
    width: 11px;
    height: 36px;
    border: 1px solid #888;
    background: #444;
}

/* cell properties dialog */
.dialog {
    position: absolute;
    left: 428px;
    top: 148px;
    width: 426px;
    height: 387px;
    padding: 0 6px 6px 6px;
    border: 1px solid #555;
    border-radius: 6px;
    background: #fafafa;
    box-shadow: 1px 2px 5px #888;
    color: #1a1a1a;
}

.dialog-head {
    height: 26px;
    display: flex;
    justify-content: space-between;
    font-family: "Open Sans", sans-serif;
    font-size: 11.5px;
    letter-spacing: -.3px;
    line-height: 26px;
}

.dialog-buttons {
    height: 18px;
    width: 71px;
    display: flex;
    border: 1px solid #aaa;
    border-top: 0;
    border-radius: 0 0 4px 4px;
}

.dialog-buttons b {
    width: 26px;
    border-right: 1px solid #bbb;
    text-align: center;
    line-height: 17px;
    font-size: 13px;
    color: #555;
}

.dialog-buttons svg {
    width: 44px;
    height: 17px;
}

.dialog-body {
    height: 353px;
    padding: 4px 8px 0 4px;
    border: 1px solid #999;
    background: #f0f0f0;
}

.legend {
    height: 16px;
    display: flex;
    align-items: center;
    gap: 5px;
    line-height: 15px;
}

.legend::after {
    content: "";
    height: 1px;
    flex: 1;
    background: #aaa;
}

.legend.inset {
    padding-left: 5px;
}

.layout-area {
    height: 104px;
    display: flex;
}

.fields {
    width: 225px;
    height: 99px;
    padding: 2px 0 0 14px;
    display: grid;
    grid-template-columns: 110px 1fr;
    grid-template-rows: 25px 24px 24px 24px;
    align-items: center;
}

.select {
    width: 73px;
    height: 20px;
    display: flex;
    align-items: center;
    justify-content: space-between;
    padding: 0 3px;
    border: 1px solid #777;
    border-radius: 2px;
    background: linear-gradient(#f3f3f3, #e0e0e0);
}

.select svg {
    width: 8px;
    height: 16px;
}

.spin {
    display: flex;
    align-items: center;
    gap: 2px;
}

.spin span {
    width: 57px;
    height: 18px;
    padding-left: 3px;
    border: 1px solid #ddd;
    border-top: 2px solid #777;
    border-left: 2px solid #777;
    background: #fff;
    line-height: 15px;
}

.spin.small span {
    width: 48px;
}

.steps {
    width: 13px;
    height: 16px;
    border: 1px solid #aaa;
    background: linear-gradient(#aaa, #aaa) 0 7px / 13px 1px no-repeat, #f8f8f8;
    position: relative;
}

.steps::before, .steps::after {
    content: "";
    position: absolute;
    left: 3px;
    top: 2px;
    border: 3px solid transparent;
    border-top: 0;
    border-bottom-color: #6d6d9b;
}

.steps::after {
    top: 10px;
    border-bottom: 0;
    border-top: 3px solid #6d6d9b;
}

.sizes {
    padding-top: 5px;
}

.check {
    height: 16px;
    display: flex;
    align-items: center;
    gap: 2px;
}

.check i {
    width: 12px;
    height: 12px;
    border: 1px solid #888;
    background: #e6e6e6;
    box-shadow: inset 0 0 0 2px #f8f8f8;
}

.measure {
    height: 35px;
    display: flex;
    padding: 5px 0 0 18px;
    color: #888;
}

.measure.last {
    padding-top: 4px;
}

.measure > span {
    width: 48px;
    height: 18px;
    padding-left: 1px;
    border: 1px solid #ddd;
    border-top: 2px solid #888;
    border-left: 2px solid #888;
    line-height: 15px;
}

.measure > div {
    margin-left: 14px;
}

.measure label {
    height: 15px;
    display: flex;
    align-items: center;
    gap: 3px;
}

.measure label i {
    width: 11px;
    height: 11px;
    border: 1px solid #bbb;
    border-radius: 6px;
}

.cell-row {
    height: 34px;
    display: flex;
    padding-left: 15px;
}

.direction {
    width: 74px;
    padding-top: 14px;
}

.cell-checks {
    width: 108px;
}

.wide {
    width: 85px;
    margin-top: 13px;
}

.border-row {
    height: 24px;
    display: flex;
    align-items: center;
    padding-left: 14px;
}

.size-row {
    height: 25px;
}

.size-row .spin {
    margin-top: -4px;
}

.border-row label {
    width: 89px;
}

.color-field {
    width: 94px;
    height: 22px;
    display: flex;
    align-items: center;
    justify-content: space-between;
    padding: 0 3px 0 7px;
    border: 1px solid #ccc;
    background: #fff;
}

.color-field i {
    width: 62px;
    height: 11px;
    background: #00007d;
}

.color-field svg {
    width: 8px;
    height: 16px;
}

.bg-legend {
    margin-top: -3px;
}

.bg-legend::after {
    margin-left: 4px;
}

.bg-color {
    height: 20px;
    padding-left: 14px;
    line-height: 20px;
}

.use-bg {
    height: 24px;
    padding-left: 15px;
}

.path-row {
    height: 35px;
    padding: 0 0 12px 30px;
    display: flex;
    align-items: center;
    gap: 7px;
    border-bottom: 1px solid #aaa;
}

.path-row > i {
    width: 178px;
    height: 20px;
    border: 1px solid #999;
    border-top-width: 2px;
}

.button {
    width: 69px;
    height: 20px;
    border: 1px solid #777;
    border-radius: 3px;
    background: linear-gradient(#f6f6f6, #ddd);
    line-height: 18px;
    text-align: center;
}

.disabled {
    border-color: #bbb;
    background: #f3f3f3;
    color: #999;
}

.actions {
    height: 41px;
    display: flex;
    align-items: center;
    justify-content: flex-end;
    gap: 7px;
    margin-right: -2px;
}

/* colour menu drops over the dialog */
.color-menu {
    position: absolute;
    left: 114px;
    top: 250px;
    width: 149px;
    height: 150px;
    padding: 5px 5px 0 5px;
    background: #e5e5e5;
    border: 1px solid #eee;
    border-right: 2px solid #777;
    border-bottom: 2px solid #777;
    box-shadow: 1px 1px 2px #999;
}

.color-menu i {
    width: 11px;
    height: 11px;
    border: 1px solid #8a8a8a;
    background: #000;
}

.menu-row {
    height: 18px;
    display: flex;
    align-items: center;
    padding-left: 5px;
}

.menu-row span {
    flex: 1;
    text-align: center;
}

.menu-row.more span {
    padding-right: 3px;
}

.menu-title {
    height: 20px;
    padding: 3px 0 0 1px;
}

.swatches {
    height: 37px;
    padding: 3px 0 0 5px;
    display: grid;
    grid-template-columns: repeat(8, 17px);
    grid-template-rows: 17px 16px;
    border-bottom: 1px solid #333;
}

.color-menu .white { background: #fff; }
.color-menu .green { background: #078b07; }
.color-menu .maroon { background: #780008; }
.color-menu .olive { background: #7e8500; }
.color-menu .navy { background: #00007f; outline: 2px solid #aaa; }
.color-menu .purple { background: #760080; }
.color-menu .gray { background: #808080; }
.color-menu .yellow { background: #ff0; }
.color-menu .lime { background: #1f0; }
.color-menu .aqua { background: #1ff5f5; }
.color-menu .magenta { background: #e900ed; }
.color-menu .silver { background: #bdbdbd; }
.color-menu .red { background: #df0011; }
.color-menu .blue { background: #00f; }
.color-menu .teal { background: #118477; }

.menu-title.doc {
    padding-top: 5px;
    height: 23px;
}

.doc-color {
    display: block;
    margin: 2px 0 0 5px;
}

.more {
    height: 24px;
    margin-top: 6px;
    border-top: 1px solid #333;
}

.cursor {
    position: absolute;
    width: 12px;
    height: 19px;
    left: 212px;
    top: 302px;
}
```
